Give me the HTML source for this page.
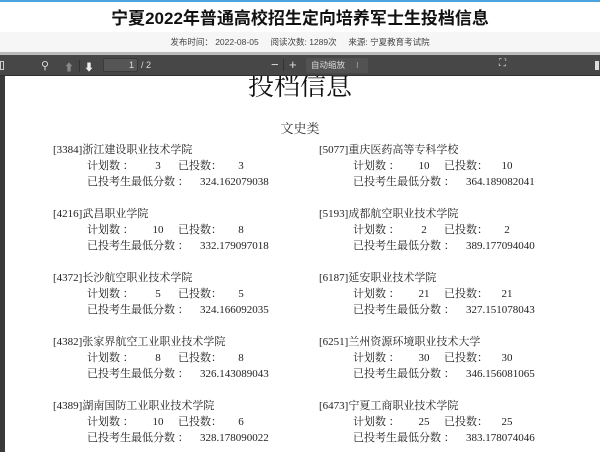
<!DOCTYPE html>
<html><head><meta charset="utf-8"><style>
*{margin:0;padding:0;box-sizing:border-box}
body{width:600px;height:452px;overflow:hidden;background:#fff;position:relative;font-family:"Liberation Sans","Noto Sans CJK SC",sans-serif}
.a{position:absolute;white-space:nowrap}
.s{font-family:"Liberation Serif","Noto Serif CJK SC",serif;font-size:11px;color:#222;line-height:14px}
.tb{color:#ddd;font-size:9px;z-index:3}
.z{z-index:2}
</style></head><body>
<div class="a" style="left:0;top:0;width:600px;height:2px;background:#4aa3df"></div>
<div class="a" style="left:0;top:8px;width:600px;text-align:center;font-size:17px;font-weight:bold;color:#111;line-height:22px">宁夏2022年普通高校招生定向培养军士生投档信息</div>
<div class="a" style="left:0;top:32px;width:600px;height:20px;background:#f6f6f6;text-align:center;font-size:8.5px;color:#444;line-height:20px">发布时间：&nbsp;2022-08-05&nbsp;&nbsp;&nbsp;&nbsp;&nbsp;阅读次数: 1289次&nbsp;&nbsp;&nbsp;&nbsp;&nbsp;来源: 宁夏教育考试院</div>
<div class="a" style="left:0;top:72px;width:600px;text-align:center;font-family:'Liberation Serif','Noto Serif CJK SC',serif;font-size:26px;color:#111;line-height:30px">投档信息</div>
<div class="a z" style="left:0;top:52px;width:600px;height:3px;background:#bbb"></div>
<div class="a z" style="left:0;top:55px;width:600px;height:21px;background:#474747;border-bottom:1px solid #2e2e2e"></div>
<div class="a tb" style="left:0;top:61px;width:4px;height:9px;border:1px solid #ccc"></div>
<div class="a tb" style="left:41px;top:59px;font-size:11px;color:#ddd">⚲</div>
<div class="a tb" style="left:64px;top:59px;color:#888;font-size:10px">⬆</div>
<div class="a tb" style="left:79px;top:60px;width:1px;height:12px;background:#333"></div>
<div class="a tb" style="left:84px;top:59px;color:#eee;font-size:10px">⬇</div>
<div class="a tb" style="left:103px;top:58px;width:35px;height:14px;background:#555;border:1px solid #3a3a3a;border-radius:2px;color:#ddd;font-size:9px;text-align:right;padding-right:3px;line-height:12px">1</div>
<div class="a tb" style="left:141px;top:60px">/ 2</div>
<div class="a tb" style="left:271px;top:57px;font-size:13px">−</div>
<div class="a tb" style="left:289px;top:57px;font-size:13px">+</div>
<div class="a tb" style="left:283px;top:59px;width:1px;height:12px;background:#333"></div>
<div class="a tb" style="left:306px;top:58px;width:62px;height:15px;background:#525252;border-radius:2px;color:#ddd;font-size:8.5px;line-height:15px;padding-left:5px">自动缩放<span style="position:absolute;left:50px">⁝</span></div>
<div class="a tb" style="left:499px;top:58px;font-size:10px">⛶</div>
<div class="a tb" style="left:595px;top:61px;width:4px;height:9px;background:#ddd"></div>
<div class="a z" style="left:0;top:76px;width:5px;height:376px;background:#3a3a3a"></div>
<div class="a" style="left:0;top:118px;width:600px;text-align:center;font-family:'Liberation Serif','Noto Serif CJK SC',serif;font-size:13px;color:#333">文史类</div>
<div id="c"></div>
<script>
var L=[["[3384]浙江建设职业技术学院","3","3","324.162079038"],["[4216]武昌职业学院","10","8","332.179097018"],["[4372]长沙航空职业技术学院","5","5","324.166092035"],["[4382]张家界航空工业职业技术学院","8","8","326.143089043"],["[4389]湖南国防工业职业技术学院","10","6","328.178090022"]];
var R=[["[5077]重庆医药高等专科学校","10","10","364.189082041"],["[5193]成都航空职业技术学院","2","2","389.177094040"],["[6187]延安职业技术学院","21","21","327.151078043"],["[6251]兰州资源环境职业技术大学","30","30","346.156081065"],["[6473]宁夏工商职业技术学院","25","25","383.178074046"]];
var h="";
function blk(d,x,y){
h+='<div class="a s" style="left:'+x+'px;top:'+(y-7)+'px">'+d[0]+'</div>';
h+='<div class="a s" style="left:'+(x+34)+'px;top:'+(y+9)+'px">计划数 ：</div>';
h+='<div class="a s" style="left:'+(x+93)+'px;top:'+(y+9)+'px;width:24px;text-align:center">'+d[1]+'</div>';
h+='<div class="a s" style="left:'+(x+125)+'px;top:'+(y+9)+'px">已投数：</div>';
h+='<div class="a s" style="left:'+(x+176)+'px;top:'+(y+9)+'px;width:24px;text-align:center">'+d[2]+'</div>';
h+='<div class="a s" style="left:'+(x+34)+'px;top:'+(y+25)+'px">已投考生最低分数 ：</div>';
h+='<div class="a s" style="left:'+(x+147)+'px;top:'+(y+25)+'px">'+d[3]+'</div>';
}
for(var i=0;i<5;i++){blk(L[i],53,150+64*i);blk(R[i],319,150+64*i);}
document.getElementById("c").innerHTML=h;
</script>
</body></html>
